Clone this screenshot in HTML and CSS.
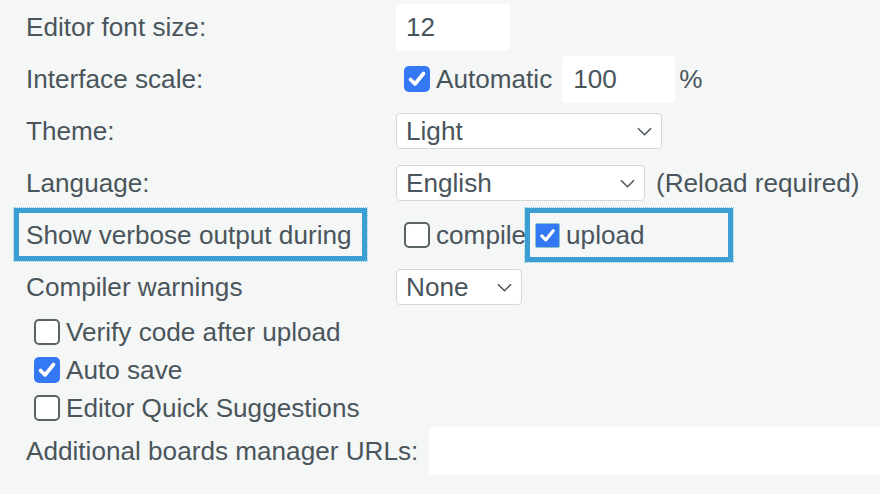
FILE: index.html
```html
<!DOCTYPE html>
<html>
<head>
<meta charset="utf-8">
<link rel="stylesheet" href="styles.css">
</head>
<body>
<div class="prefs">
  <div class="row">
    <div class="label">Editor font size:</div>
    <div class="ctrl"><div class="input w-font">12</div></div>
  </div>
  <div class="row">
    <div class="label">Interface scale:</div>
    <div class="ctrl inset">
      <span class="cb checked"><svg viewBox="0 0 26 26"><path d="M6.5 13.5 L11 18 L19.5 7.5" /></svg></span>
      <span class="cb-text">Automatic</span>
      <div class="input w-scale">100</div>
      <span class="pct">%</span>
    </div>
  </div>
  <div class="row">
    <div class="label">Theme:</div>
    <div class="ctrl">
      <div class="select w-theme"><span>Light</span><svg class="chev" viewBox="0 0 16 9"><polyline points="1,1 8,8 15,1"/></svg></div>
    </div>
  </div>
  <div class="row">
    <div class="label">Language:</div>
    <div class="ctrl">
      <div class="select w-lang"><span>English</span><svg class="chev" viewBox="0 0 16 9"><polyline points="1,1 8,8 15,1"/></svg></div>
      <span class="note">(Reload required)</span>
    </div>
  </div>
  <div class="row anno-row">
    <div class="label">Show verbose output during</div>
    <div class="ctrl inset">
      <span class="cb"></span>
      <span class="cb-text compile">compile</span>
      <span class="cb checked focus"><svg viewBox="0 0 26 26"><path d="M6.5 13.5 L11 18 L19.5 7.5" /></svg></span>
      <span class="cb-text">upload</span>
    </div>
    <div class="anno anno-label"></div>
    <div class="anno anno-upload"></div>
  </div>
  <div class="row">
    <div class="label">Compiler warnings</div>
    <div class="ctrl">
      <div class="select w-warn"><span>None</span><svg class="chev" viewBox="0 0 16 9"><polyline points="1,1 8,8 15,1"/></svg></div>
    </div>
  </div>
  <div class="check-row"><span class="cb"></span><span class="cb-text">Verify code after upload</span></div>
  <div class="check-row"><span class="cb checked"><svg viewBox="0 0 26 26"><path d="M6.5 13.5 L11 18 L19.5 7.5" /></svg></span><span class="cb-text">Auto save</span></div>
  <div class="check-row"><span class="cb"></span><span class="cb-text">Editor Quick Suggestions</span></div>
  <div class="url-row">
    <span class="url-label">Additional boards manager URLs:</span>
    <div class="input url-input"></div>
  </div>
</div>
</body>
</html>
```

FILE: styles.css
```css
html, body {
  margin: 0;
  padding: 0;
  background: #f5f7f7;
}
body {
  font-family: "Liberation Sans", Arial, sans-serif;
  font-size: 26.15px;
  color: #4a555b;
  width: 880px;
  height: 494px;
  overflow: hidden;
}
.prefs {
  padding: 1px 0 0 26px;
}
.row {
  position: relative;
  display: flex;
  align-items: center;
  height: 52px;
}
.label {
  width: 370px;
  flex: none;
  white-space: nowrap;
}
.ctrl {
  display: flex;
  align-items: center;
}
.ctrl.inset {
  padding-left: 8px;
}
.input {
  background: #ffffff;
  border-radius: 4px;
  box-sizing: border-box;
  padding-left: 10px;
  display: flex;
  align-items: center;
  height: 47px;
}
.w-font { width: 114px; }
.w-scale { width: 113px; margin-left: 10px; padding-left: 11px; }
.pct { margin-left: 4px; }
.cb {
  width: 26px;
  height: 26px;
  box-sizing: border-box;
  border: 2px solid #5b6367;
  border-radius: 5px;
  background: #ffffff;
  flex: none;
  display: inline-flex;
}
.cb.checked {
  background: #3478f6;
  border: none;
}
.cb.focus {
  width: 25px;
  height: 25px;
  border-radius: 2px;
  border: 1.5px solid #8fc3c9;
  background: #3478f6;
}
.cb svg {
  width: 100%;
  height: 100%;
}
.cb path {
  fill: none;
  stroke: #ffffff;
  stroke-width: 3.6;
  stroke-linecap: round;
  stroke-linejoin: round;
}
.cb-text {
  margin-left: 6px;
  white-space: nowrap;
}
.compile {
  margin-right: 9px;
}
.select {
  box-sizing: border-box;
  height: 36px;
  background: #ffffff;
  border: 1.5px solid #d5d8d9;
  border-radius: 4px;
  display: flex;
  align-items: center;
  justify-content: space-between;
  padding: 0 9px 0 9px;
}
.chev {
  width: 15px;
  height: 9px;
}
.chev polyline {
  fill: none;
  stroke: #4a555b;
  stroke-width: 1.6;
}
.w-theme { width: 266px; }
.w-lang { width: 249px; }
.w-warn { width: 126px; }
.note {
  margin-left: 11px;
  white-space: nowrap;
}
.anno {
  position: absolute;
  box-sizing: border-box;
  border: 5px solid #3c9fd4;
  outline: 1px dotted rgba(60, 159, 212, 0.55);
  outline-offset: 0;
  pointer-events: none;
}
.anno-label {
  left: -12px;
  top: -1px;
  width: 353px;
  height: 53px;
}
.anno-upload {
  left: 499px;
  top: -1px;
  width: 208px;
  height: 54px;
}
.check-row {
  display: flex;
  align-items: center;
  height: 38px;
  padding-left: 8px;
}
.url-row {
  display: flex;
  align-items: center;
  height: 48px;
}
.url-label {
  width: 403px;
  flex: none;
  white-space: nowrap;
}
.url-input {
  flex: 1;
  height: 48px;
  border-radius: 4px 0 0 4px;
}
```
